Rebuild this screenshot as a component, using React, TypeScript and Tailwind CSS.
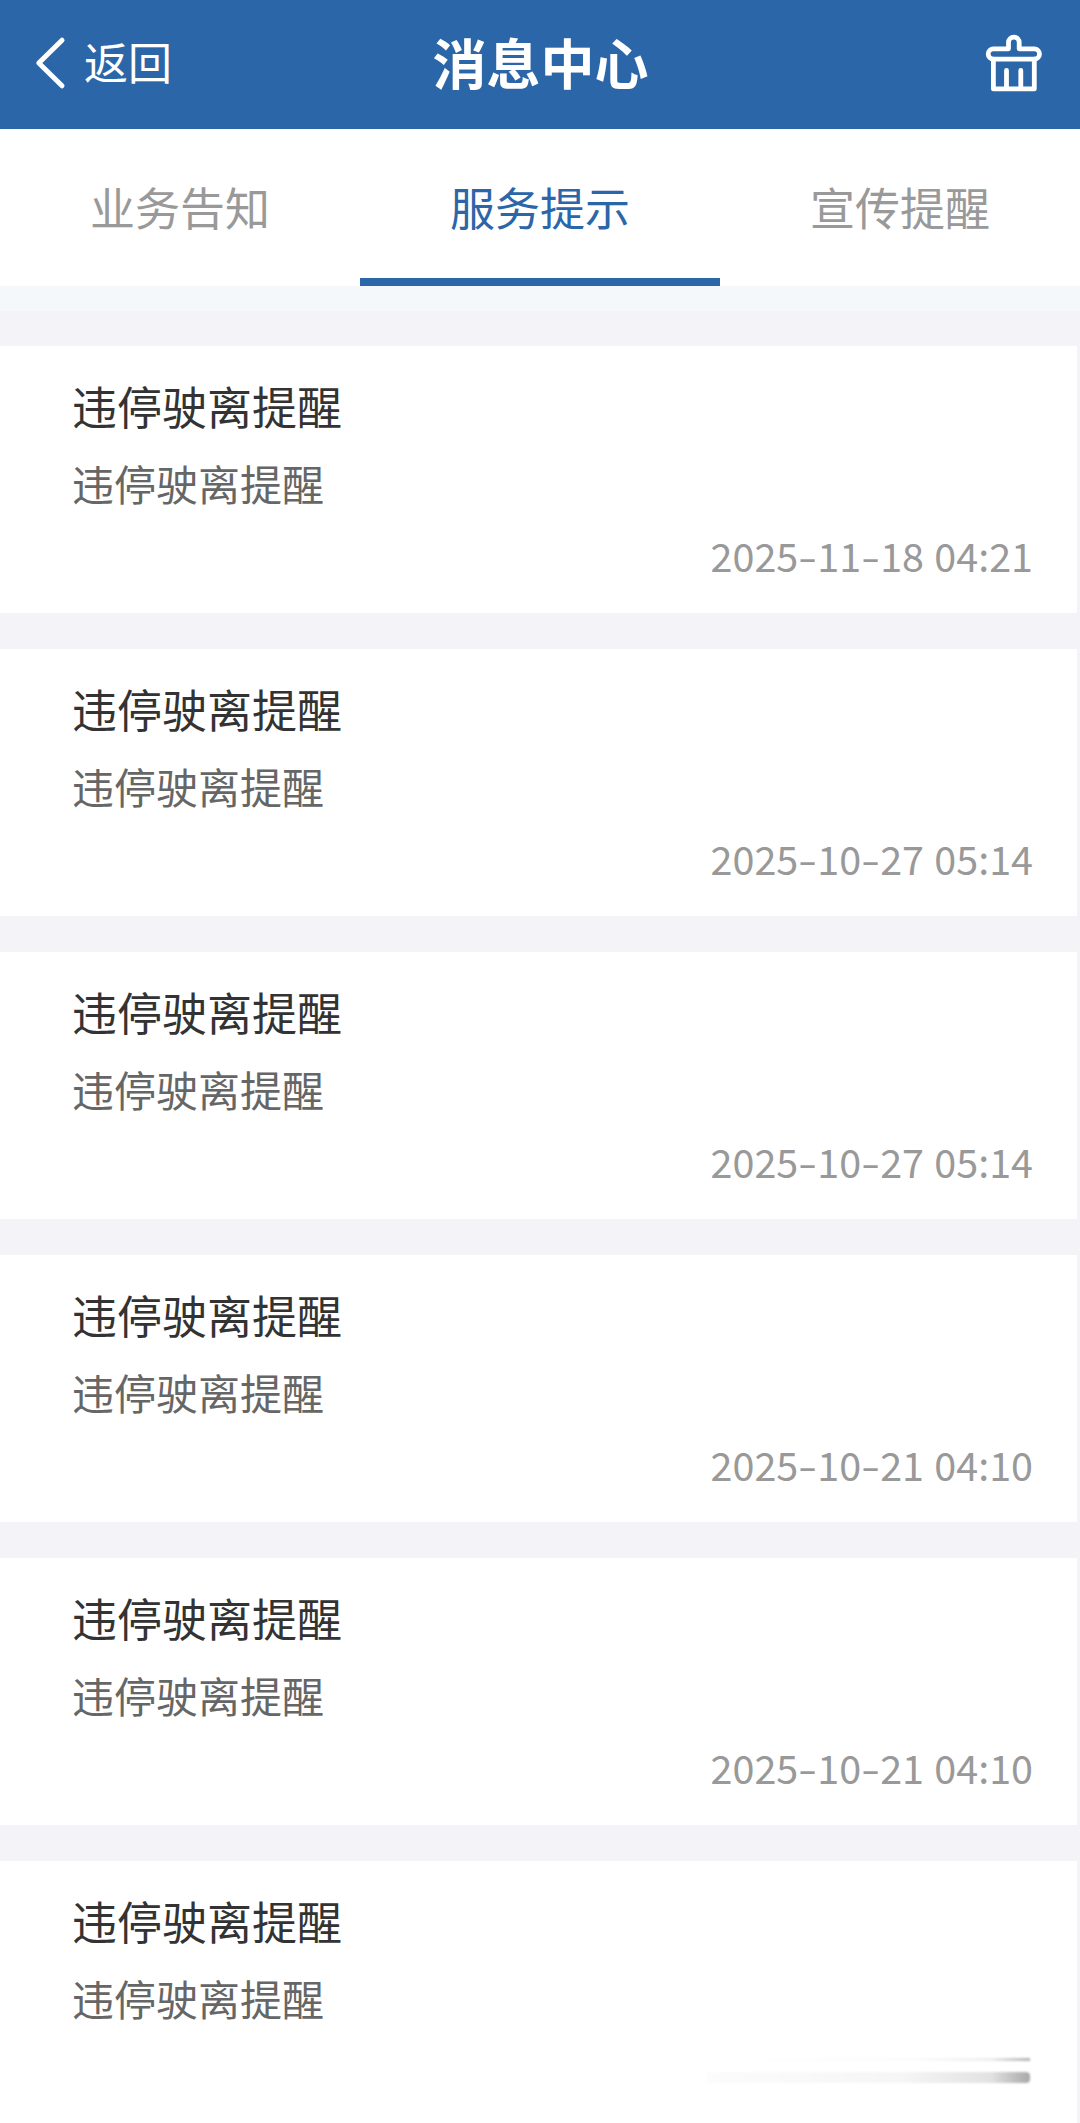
import { clsx } from 'clsx';

interface Message {
    id: number;
    title: string;
    content: string;
    time?: string;
}

const TABS = ['业务告知', '服务提示', '宣传提醒'];
const ACTIVE_TAB = '服务提示';

const MESSAGES: Message[] = [
    { id: 1, title: '违停驶离提醒', content: '违停驶离提醒', time: '2025-11-18 04:21' },
    { id: 2, title: '违停驶离提醒', content: '违停驶离提醒', time: '2025-10-27 05:14' },
    { id: 3, title: '违停驶离提醒', content: '违停驶离提醒', time: '2025-10-27 05:14' },
    { id: 4, title: '违停驶离提醒', content: '违停驶离提醒', time: '2025-10-21 04:10' },
    { id: 5, title: '违停驶离提醒', content: '违停驶离提醒', time: '2025-10-21 04:10' },
    { id: 6, title: '违停驶离提醒', content: '违停驶离提醒' },
];

function BackIcon() {
    return (
        <svg className="h-[54px] w-8" viewBox="0 0 32 54" fill="none" stroke="currentColor" strokeWidth="5" strokeLinecap="round" strokeLinejoin="round">
            <path d="M27 4.2 3.8 27 27 49.8" />
        </svg>
    );
}

function ClearIcon() {
    return (
        <svg className="h-[58px] w-[58px]" viewBox="0 0 58 58" fill="none" stroke="currentColor" strokeWidth="4.8" strokeLinecap="round" strokeLinejoin="round">
            <path d="M23.5 14.8V8.5a5.35 5.35 0 0 1 10.7 0v6.3h15.1a5.2 5.2 0 0 1 0 10.4H8.4a5.2 5.2 0 0 1 0-10.4Z" />
            <path d="M8.4 25.2V54.9h40.9V25.2M21.5 36.4v17.5M35.8 36.4v17.5" />
        </svg>
    );
}

function Header() {
    return (
        <header className="grid h-[129px] grid-cols-3 items-center bg-[#2b66a8] pr-[37px] pb-[3px] pl-[35px] text-white">
            <button className="flex items-center gap-[17px] text-left">
                <BackIcon />
                <span className="pb-[5px] text-[44px] leading-[60px]">返回</span>
            </button>
            <h1 className="pb-[2px] pl-[3px] text-center text-[54px] leading-[80px] font-bold whitespace-nowrap">消息中心</h1>
            <button className="justify-self-end">
                <ClearIcon />
            </button>
        </header>
    );
}

function Tabs() {
    return (
        <nav className="grid h-[157px] grid-cols-3 bg-white">
            {TABS.map((tab) => (
                <button
                    key={tab}
                    className={clsx(
                        'border-b-8 pt-[7px] text-center text-[45px] leading-[60px]',
                        tab === ACTIVE_TAB ? 'border-[#2b66a8] text-[#2b66a8]' : 'border-transparent text-[#999999]',
                    )}
                >
                    {tab}
                </button>
            ))}
        </nav>
    );
}

function MessageTime({ time }: { time: string }) {
    return (
        <time className="block text-right text-[39.5px] leading-[48px] text-[#999999] [word-spacing:1.5px]">
            {time.split('-').map((part, i) => (
                <span key={i}>
                    {i > 0 && <span className="inline-block w-[19px] scale-x-140 text-center">-</span>}
                    {part}
                </span>
            ))}
        </time>
    );
}

function TimeFade() {
    return (
        <div className="mr-[3px] ml-auto flex w-[324px] flex-col gap-[11px] pt-3 blur-[0.8px]">
            <div className="h-[3px] bg-[linear-gradient(to_right,#fff,#fbfbfb_65%,#eeeeee_88%,#b4b4b4)]" />
            <div className="h-[11px] rounded-r-sm bg-[linear-gradient(to_right,#fcfcfc,#f6f6f6_60%,#e2e2e2_88%,#a8a8a8)]" />
        </div>
    );
}

function MessageCard({ message }: { message: Message }) {
    return (
        <article className="mr-[3px] h-[267px] bg-white pt-[30px] pr-[44px] pl-[72px]">
            <h2 className="text-[45px] leading-[60px] text-[#333333]">{message.title}</h2>
            <p className="mt-[19px] text-[42px] leading-[56px] text-[#666666]">{message.content}</p>
            <div className="mt-[20px]">
                {message.time ? <MessageTime time={message.time} /> : <TimeFade />}
            </div>
        </article>
    );
}

export default function App() {
    return (
        <div className="h-[2123px] w-[1080px] overflow-hidden bg-[#f3f3f8] font-['Noto_Sans_CJK_SC',sans-serif]">
            <Header />
            <Tabs />
            <div className="h-[25px] bg-[#f4f8fa]" />
            <main className="mt-[35px] flex flex-col gap-9">
                {MESSAGES.map((message) => (
                    <MessageCard key={message.id} message={message} />
                ))}
            </main>
        </div>
    );
}
